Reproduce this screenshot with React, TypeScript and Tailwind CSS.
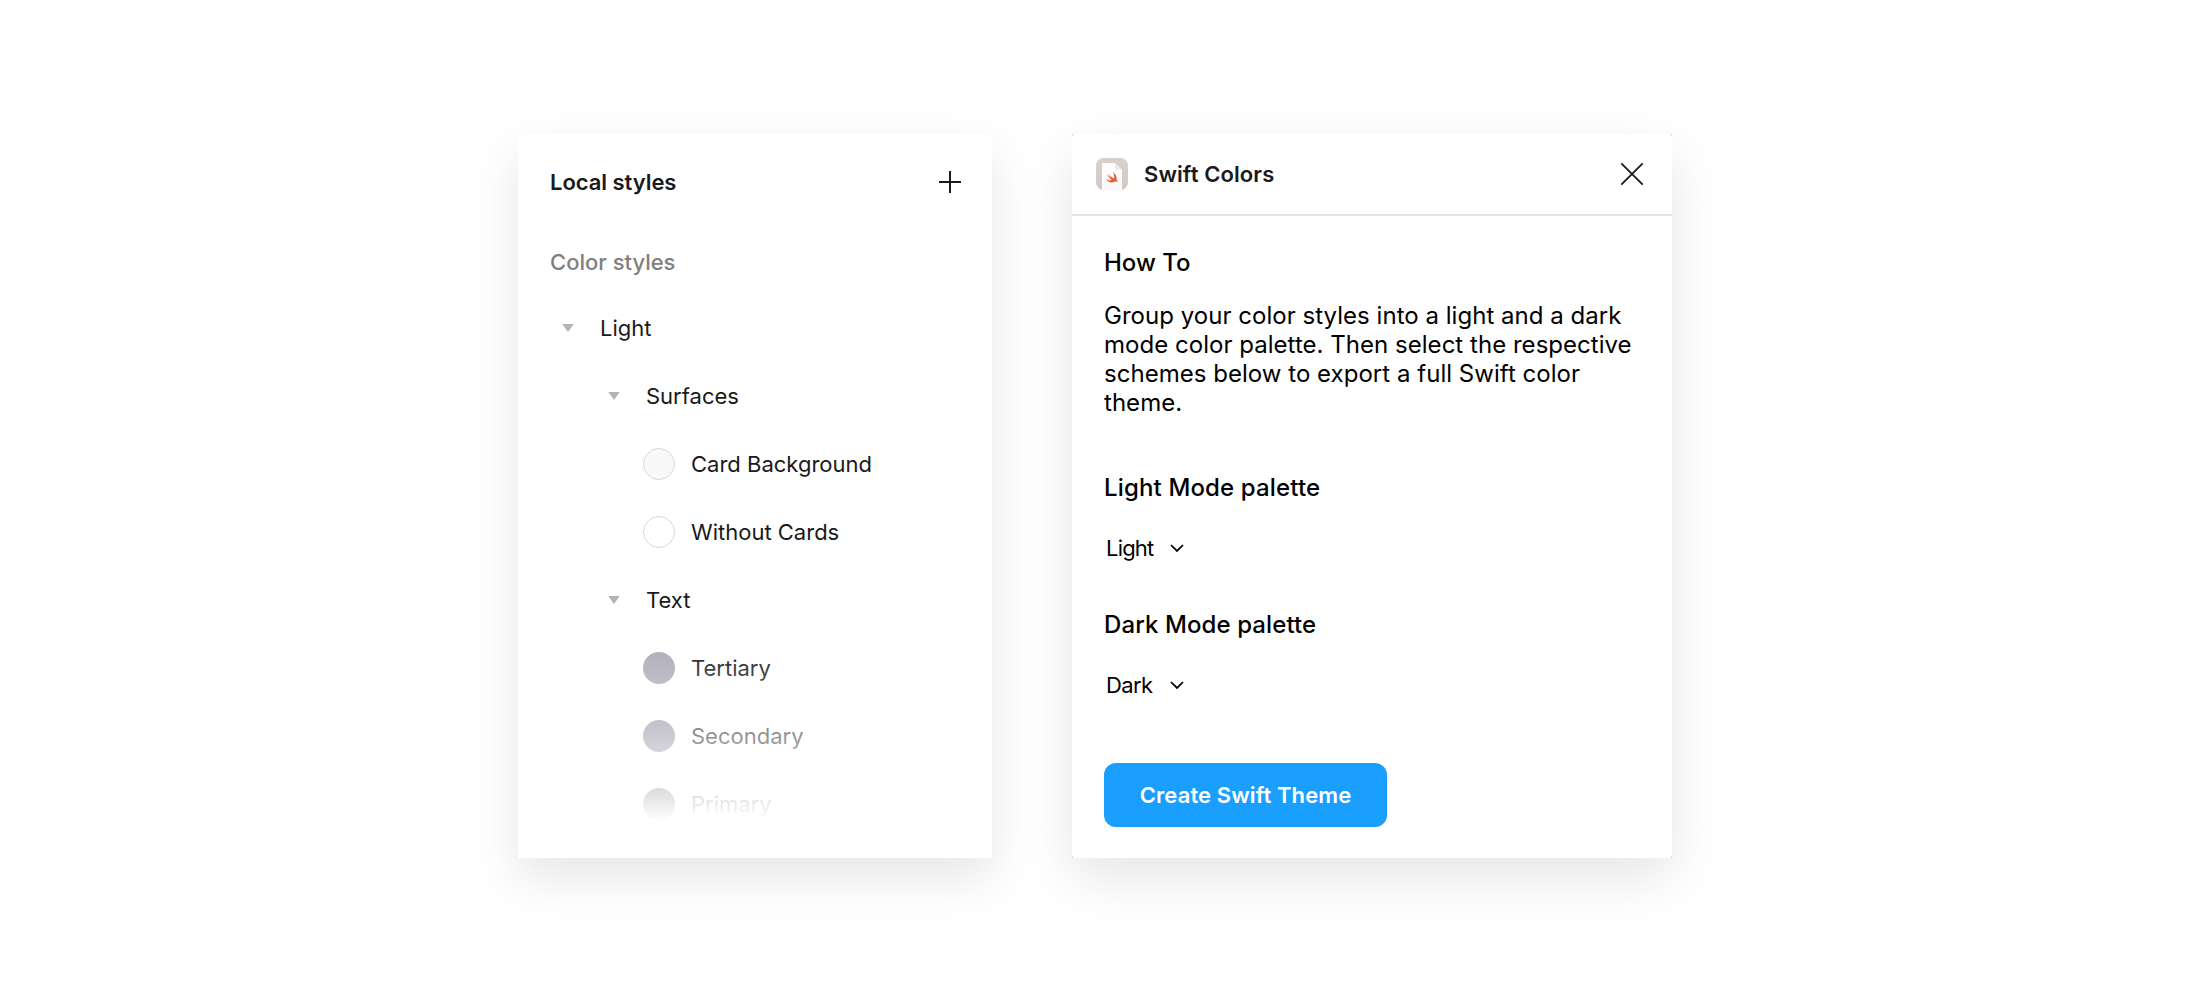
function Caret() {
  return (
    <svg className="block h-2 w-3 shrink-0" viewBox="0 0 12 8" fill="#b3b3b3">
      <path d="M0.3 0h11.4L6 8z" />
    </svg>
  );
}

function Chevron() {
  return (
    <svg className="block h-[10px] w-4 shrink-0" viewBox="0 0 16 10" fill="none" stroke="#000" strokeWidth="1.75">
      <path d="M2 2 8 7.900 14 2" />
    </svg>
  );
}

function SwiftIcon() {
  return (
    <svg className="block size-8 shrink-0" viewBox="0 0 32 32">
      <defs>
        <linearGradient id="tile" x1="0" y1="0" x2="0" y2="1">
          <stop offset="0" stopColor="#d9d0ce" />
          <stop offset="1" stopColor="#d6c6c5" />
        </linearGradient>
        <linearGradient id="sheet" x1="0" y1="0" x2="0" y2="1">
          <stop offset="0" stopColor="#ffffff" />
          <stop offset="1" stopColor="#f8f8f8" />
        </linearGradient>
      </defs>
      <rect width="32" height="32" rx="7.5" fill="url(#tile)" />
      <path d="M6 32V6.5Q6 5 7.5 5H19l7 7v20z" fill="url(#sheet)" />
      <path d="M19 5l7 7h-5.5Q19 12 19 10.500z" fill="#ececec" />
      <path
        transform="translate(9.7 13.800) scale(0.5)"
        fill="#e05a3c"
        d="M14.500 0.500C20 4.500 22.800 10.500 21.600 15.200 24.300 18.500 23.600 21.500 23.100 20.700 21.200 18.200 18.500 19.200 17.200 19.900 11.500 22.800 4 20.500 0.300 14.800 3.800 17.100 8.600 18 12.200 16.200 8 13 4.500 8.800 2 5.200 5.200 8.200 8.800 11 11.200 12.400 8.800 9.800 6.200 6.400 5.200 4.300 8.800 8 13.400 11.800 16.600 13.700 17.600 10 16.800 5 14.500 0.500z"
      />
    </svg>
  );
}

function Group({ label, nested }: { label: string; nested?: boolean }) {
  return (
    <div className={nested ? 'flex h-[68px] items-center gap-[26px] pl-[90px]' : 'flex h-[68px] items-center gap-[26px] pl-11'}>
      <Caret />
      <span>{label}</span>
    </div>
  );
}

function Swatch({ label, color }: { label: string; color: string }) {
  return (
    <div className="flex h-[68px] items-center gap-4 pl-[125px]">
      <span className={`size-8 rounded-full ${color}`} />
      <span>{label}</span>
    </div>
  );
}

function Select({ value, tracking }: { value: string; tracking: string }) {
  return (
    <button className="flex h-8 items-center pl-0.5 text-[22px] text-black">
      <span className={`w-[62.500px] text-left ${tracking}`}>{value}</span>
      <Chevron />
    </button>
  );
}

export default function App() {
  return (
    <main className="flex h-[1000px] w-[2200px] items-start gap-20 bg-white pt-[134px] pl-[518px] font-['Inter',sans-serif] text-[22px] text-[#1a1a1a]">
      <section className="relative h-[724px] w-[474px] rounded-t-[4px] bg-white shadow-[0_20px_50px_rgba(0,0,0,0.1)]">
        <header className="flex h-24 items-center justify-between pr-[31px] pl-8">
          <h2 className="font-semibold tracking-[-0.05px]">Local styles</h2>
          <svg className="block size-[22px]" viewBox="0 0 22 22" stroke="#1a1a1a" strokeWidth="2">
            <path d="M11 0v22M0 11h22" />
          </svg>
        </header>
        <h3 className="flex h-16 items-center pl-8 font-medium text-[#808080]">Color styles</h3>
        <div>
          <Group label="Light" />
          <Group label="Surfaces" nested />
          <Swatch label="Card Background" color="border border-[#d9d9d9] bg-[#f9f9fb]" />
          <Swatch label="Without Cards" color="border border-[#d9d9d9] bg-white" />
          <Group label="Text" nested />
          <Swatch label="Tertiary" color="bg-[#acabb7]" />
          <Swatch label="Secondary" color="bg-[#9190a0]" />
          <Swatch label="Primary" color="bg-[#3c3b50]" />
        </div>
        <div className="absolute inset-x-0 top-[507px] h-[217px] bg-[linear-gradient(to_bottom,rgba(255,255,255,0)_0px,#fff_180px)]" />
      </section>

      <section className="h-[724px] w-[600px] bg-[#d8d8d8] shadow-[0_20px_50px_rgba(0,0,0,0.1)]">
        <div className="h-full rounded-[4px] bg-white">
          <header className="flex h-[82px] items-center border-b-2 border-[#e5e5e5] pr-7 pl-6">
            <SwiftIcon />
            <h2 className="ml-4 flex-1 font-semibold tracking-[0.1px]">Swift Colors</h2>
            <svg className="block size-6" viewBox="0 0 24 24" stroke="#1a1a1a" strokeWidth="1.8">
              <path d="M1.300 1.300 22.700 22.700M22.700 1.300 1.300 22.700" />
            </svg>
          </header>
          <div className="flex flex-col items-start pt-8 pl-8 text-2xl leading-[29px] text-black">
            <h3 className="font-medium">How To</h3>
            <p className="mt-6 w-[536px] tracking-[0.03px]">
              Group your color styles into a light and a dark mode color palette. Then select the respective schemes
              below to export a full Swift color theme.
            </p>
            <h3 className="mt-14 font-medium tracking-[0.15px]">Light Mode palette</h3>
            <div className="mt-[30px]">
              <Select value="Light" tracking="tracking-[-0.8px]" />
            </div>
            <h3 className="mt-[46px] font-medium tracking-[0.1px]">Dark Mode palette</h3>
            <div className="mt-[30px]">
              <Select value="Dark" tracking="tracking-[-0.6px]" />
            </div>
            <button className="mt-[62px] h-16 w-[283px] rounded-xl bg-[#1a9fff] text-[22px] font-semibold tracking-[0.1px] text-white">
              Create Swift Theme
            </button>
          </div>
        </div>
      </section>
    </main>
  );
}
